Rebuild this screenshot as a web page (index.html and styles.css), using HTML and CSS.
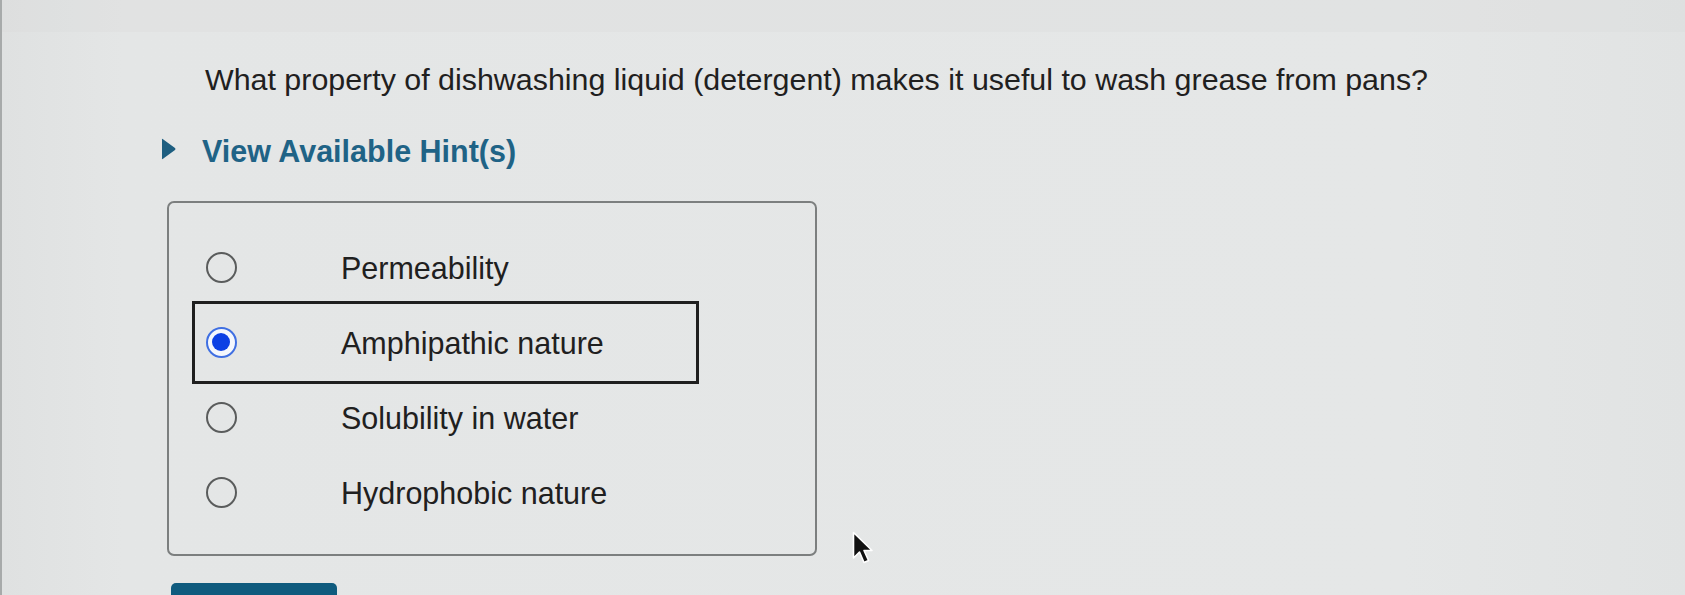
FILE: index.html
```html
<!DOCTYPE html>
<html lang="en">
<head>
<meta charset="utf-8">
<title>Question</title>
<link rel="stylesheet" href="styles.css">
</head>
<body>
<div class="screen">
  <div class="top-band"></div>
  <main class="question-area">
    <p class="question">What property of dishwashing liquid (detergent) makes it useful to wash grease from pans?</p>
    <div class="hint-toggle">
      <svg class="hint-arrow" width="15" height="22" viewBox="0 0 15 22" aria-hidden="true"><path d="M1 1.5 Q0.5 0.4 2 1.2 L14 10 Q15 11 14 12 L2 20.8 Q0.5 21.6 1 20.5 Z" /></svg>
      <span class="hint-label">View Available Hint(s)</span>
    </div>
    <div class="choices">
      <label class="choice">
        <span class="radio"></span>
        <span class="choice-text">Permeability</span>
      </label>
      <label class="choice selected">
        <span class="radio checked"></span>
        <span class="choice-text">Amphipathic nature</span>
      </label>
      <label class="choice">
        <span class="radio"></span>
        <span class="choice-text">Solubility in water</span>
      </label>
      <label class="choice">
        <span class="radio"></span>
        <span class="choice-text">Hydrophobic nature</span>
      </label>
    </div>
    <button class="submit" type="button" aria-label="Submit"></button>
  </main>
  <svg class="cursor" width="24" height="36" viewBox="0 0 24 36" aria-hidden="true"><path d="M1.5 1.5 L1.5 27 L7.5 21 L12 31.5 L16.5 29.5 L12 19.5 L20 19.5 Z" /></svg>
</div>
</body>
</html>
```
FILE: styles.css
```css
html, body {
  margin: 0;
  padding: 0;
  height: 100%;
  overflow: hidden;
}

body {
  background: #e4e6e6;
  font-family: "Liberation Sans", Arial, Helvetica, sans-serif;
  color: #1f2020;
}

.screen {
  position: relative;
  height: 595px;
  border-left: 2px solid #a7aaaa;
  background: linear-gradient(90deg, #dfe1e1 0px, #e4e6e6 120px, #e5e7e7 1400px, #e1e3e3 1685px);
}

.top-band {
  height: 32px;
  background: rgba(215, 217, 217, 0.25);
}

.question-area {
  padding-left: 159px;
}

.question {
  margin: 29px 0 0 44px;
  font-size: 30.4px;
  line-height: 36px;
  white-space: nowrap;
}

.hint-toggle {
  display: flex;
  align-items: center;
  gap: 26px;
  margin-top: 36px;
  height: 36px;
}

.hint-arrow {
  fill: #1d5e80;
  margin-top: -4px;
}

.hint-label {
  font-weight: bold;
  font-size: 30.5px;
  line-height: 36px;
  color: #1f6386;
}

.choices {
  box-sizing: border-box;
  width: 650px;
  margin: 32px 0 0 6px;
  padding: 27px 0 24px 0;
  border: 2px solid #7c7f7f;
  border-radius: 7px;
}

.choice {
  display: flex;
  align-items: center;
  width: 499px;
  height: 75px;
  margin-left: 27px;
  box-sizing: border-box;
  padding-left: 10px;
}

.choice.selected {
  outline: 3px solid #1f1f1f;
  outline-offset: 1px;
}

.radio {
  box-sizing: border-box;
  flex: none;
  width: 31px;
  height: 31px;
  border: 2.2px solid #5a5c5c;
  border-radius: 50%;
  margin-right: 104px;
  position: relative;
}

.radio.checked {
  border: 2.5px solid #3f6fe2;
  background: #f4f7fd;
}

.radio.checked::after {
  content: "";
  position: absolute;
  left: 4px;
  top: 4px;
  width: 18px;
  height: 18px;
  border-radius: 50%;
  background: #0c40e4;
}

.choice-text {
  font-size: 30.5px;
  line-height: 36px;
  white-space: nowrap;
}

.submit {
  display: block;
  margin: 27px 0 0 10px;
  width: 166px;
  height: 56px;
  border: none;
  border-radius: 5px 5px 0 0;
  background: #0f5b7e;
}

.cursor {
  position: absolute;
  left: 850px;
  top: 531px;
}

.cursor path {
  fill: #111111;
  stroke: #ffffff;
  stroke-width: 1.6;
  stroke-linejoin: round;
}
```
